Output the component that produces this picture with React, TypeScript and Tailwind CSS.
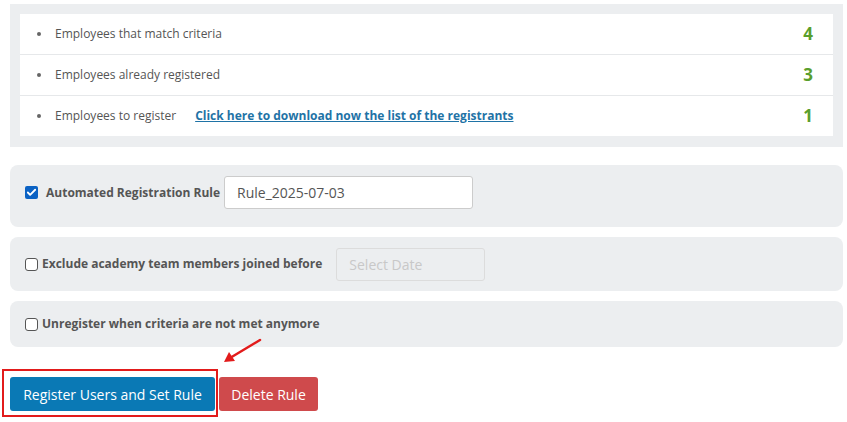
import { Check } from 'lucide-react';

const stats = [
  { label: 'Employees that match criteria', value: 4 },
  { label: 'Employees already registered', value: 3 },
  { label: 'Employees to register', value: 1, link: 'Click here to download now the list of the registrants' },
];

const Box = ({ checked }: { checked?: boolean }) =>
  checked ? (
    <span className="flex h-[13px] w-[13px] shrink-0 items-center justify-center rounded-[2px] bg-[#0b62c4]">
      <Check className="h-[11px] w-[11px] text-white" strokeWidth={4} />
    </span>
  ) : (
    <span className="h-[13px] w-[13px] shrink-0 rounded-[3px] border border-[#555] bg-white" />
  );

const App = () => {
  return (
    <div className="relative h-[422px] w-[847px] bg-white text-[#555]" style={{ fontFamily: '"Open Sans", sans-serif' }}>
      <div className="pl-[10px] pr-[4px] pt-[4px]">
        {/* stats */}
        <div className="bg-[#eceef0] px-[10px] pt-[10px] pb-[11px]">
          <div className="bg-white">
            {stats.map((s, i) => (
              <div
                key={s.label}
                className={`flex items-center pl-[16px] pr-[20px] ${i > 0 ? 'h-[41px] border-t border-[#e6e8ea]' : 'h-[40px]'}`}
              >
                <span className="ml-[1px] mr-[14px] h-[4px] w-[4px] rounded-full bg-[#666]" />
                <span className="text-[12px]">{s.label}</span>
                {s.link && (
                  <a href="#" className="ml-[19px] text-[12px] font-bold text-[#1f73a6] underline">
                    {s.link}
                  </a>
                )}
                <span className="ml-auto text-[17px] font-bold text-[#5a9e2c]">{s.value}</span>
              </div>
            ))}
          </div>
        </div>

        <div className="mt-[18px] flex flex-col gap-[10px]">
          <div className="flex h-[62px] items-start rounded-[8px] bg-[#eceef0] pl-[15px] pt-[11px]">
            <div className="flex h-[33px] items-center">
              <Box checked />
              <span className="ml-[8px] text-[12px] font-bold">Automated Registration Rule</span>
            </div>
            <input
              className="ml-[4px] h-[33px] w-[249px] rounded-[3px] border border-[#ccc] bg-white px-[12px] text-[14px] text-[#555] outline-none"
              defaultValue="Rule_2025-07-03"
            />
          </div>

          <div className="flex h-[54px] items-center rounded-[8px] bg-[#eceef0] pl-[15px]">
            <Box />
            <span className="ml-[4px] text-[12px] font-bold">Exclude academy team members joined before</span>
            <input
              className="ml-[14px] h-[33px] w-[149px] rounded-[3px] border border-[#dcdcdc] bg-[#eceef0] px-[12px] text-[14px] outline-none placeholder:text-[#c8c8c8]"
              placeholder="Select Date"
              disabled
            />
          </div>

          <div className="flex h-[46px] items-center rounded-[8px] bg-[#eceef0] pl-[15px]">
            <Box />
            <span className="ml-[4px] text-[12px] font-bold">Unregister when criteria are not met anymore</span>
          </div>
        </div>

        <div className="mt-[30px] flex gap-[4px]">
          <button className="h-[34px] w-[205px] rounded-[3px] bg-[#0a79b5] text-[14px] text-white">
            Register Users and Set Rule
          </button>
          <button className="h-[34px] w-[99px] rounded-[3px] bg-[#cf4a4c] text-[14px] text-white">
            Delete Rule
          </button>
        </div>
      </div>

      {/* annotation */}
      <div className="absolute left-[2px] top-[369px] h-[48px] w-[216px] border-2 border-[#e21b1b]" />
      <svg className="absolute left-[220px] top-[336px]" width="46" height="30" viewBox="0 0 46 30">
        <line x1="40" y1="4" x2="10" y2="22" stroke="#e21b1b" strokeWidth="2.5" strokeLinecap="round" />
        <polygon points="4,26 9,16 15,25" fill="#e21b1b" />
      </svg>
    </div>
  );
};

export default App;
